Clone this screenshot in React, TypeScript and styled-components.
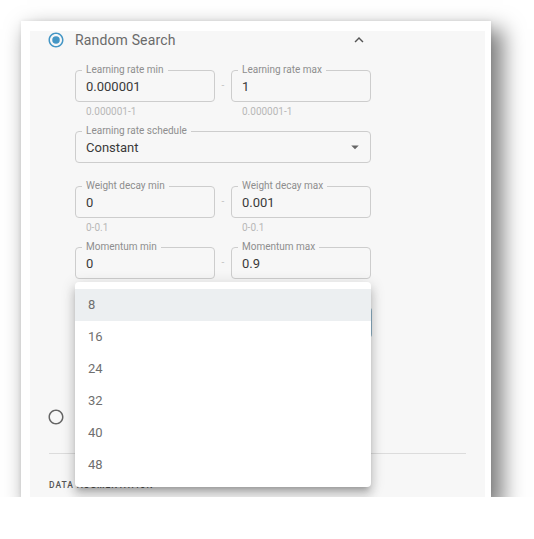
import styled, { createGlobalStyle } from "styled-components";

const GlobalStyle = createGlobalStyle`
  html, body {
    margin: 0;
    background: #ffffff;
    font-family: Roboto, "Liberation Sans", sans-serif;
  }
`;

const Card = styled.div`
  margin: 21px 0 0 21px;
  width: 470px;
  height: 476px;
  box-sizing: border-box;
  padding: 0 6px 0 9px;
  background: #ffffff;
  overflow: hidden;
  box-shadow: 9px 11px 20px 3px rgba(0, 0, 0, 0.5), 0 0 4px rgba(0, 0, 0, 0.07);
`;

const Panel = styled.div`
  height: 100%;
  background: #f7f7f7;
  padding: 0 19px 0 17px;
  box-sizing: border-box;
`;

const OptionRow = styled.div<{ $mt: number }>`
  display: flex;
  align-items: center;
  width: 321px;
  height: 18px;
  margin-top: ${(p) => p.$mt}px;
`;

const OptionLabel = styled.span`
  margin-left: 10px;
  font-size: 14px;
  letter-spacing: 0.15px;
  color: #6a6a6a;
`;

const Toggle = styled.span`
  margin-left: auto;
  display: flex;
  color: #555;
`;

const OptionBody = styled.div`
  margin: 15px 0 0 28px;
  width: 296px;
`;

const RangeRow = styled.div<{ $mt?: number }>`
  display: flex;
  align-items: flex-end;
  margin-top: ${(p) => p.$mt ?? 0}px;
`;

const Dash = styled.span`
  width: 16px;
  text-align: center;
  font-size: 10px;
  color: #c4c4c4;
  line-height: 32px;
`;

const HelperRow = styled.div`
  display: flex;
  gap: 16px;
  margin-top: 4px;
`;

const Helper = styled.span`
  width: 140px;
  box-sizing: border-box;
  padding-left: 11px;
  font-size: 10px;
  line-height: 12px;
  color: #b8b8b8;
`;

const Box = styled.fieldset<{ $width: number; $focused?: boolean; $mt?: number; $flat?: boolean }>`
  margin: ${(p) => p.$mt ?? 0}px 0 0 0;
  min-width: 0;
  width: ${(p) => p.$width}px;
  box-sizing: border-box;
  padding: ${(p) => (p.$flat ? "2px" : "0")} 6px 5px 6px;
  border: ${(p) => (p.$focused ? "2px solid #8fb3c7" : "1px solid #cdcdcd")};
  border-radius: 4px;
`;

const Legend = styled.legend`
  padding: 0 4px;
  font-size: 10px;
  line-height: 12px;
  color: #8e8e8e;
`;

const Value = styled.div`
  display: flex;
  align-items: center;
  justify-content: space-between;
  padding-left: 4px;
  height: 20px;
  font-size: 13px;
  color: #3a3a3a;
`;

const MenuAnchor = styled.div`
  position: relative;
  margin-top: 12px;
`;

const Menu = styled.ul`
  position: absolute;
  top: -25px;
  left: 0;
  width: 296px;
  margin: 0;
  padding: 7px 0 6px;
  list-style: none;
  background: #ffffff;
  border-radius: 4px;
  z-index: 10;
  box-shadow: 0 5px 5px -3px rgba(0, 0, 0, 0.2), 0 8px 10px 1px rgba(0, 0, 0, 0.14),
    0 3px 14px 2px rgba(0, 0, 0, 0.12);
`;

const MenuItem = styled.li<{ $selected?: boolean }>`
  height: 32px;
  line-height: 32px;
  padding-left: 13px;
  font-size: 13px;
  color: #6f6f6f;
  background: ${(p) => (p.$selected ? "#eceff1" : "transparent")};
`;

const Divider = styled.hr`
  margin: 27px 0 0 2px;
  border: none;
  border-top: 1px solid #dcdcdc;
`;

const SectionTitle = styled.div`
  margin: 25px 0 0 2px;
  font-size: 8.5px;
  font-weight: 500;
  letter-spacing: 1px;
  line-height: 12px;
  color: #555;
`;

const RadioIcon = ({ checked }: { checked?: boolean }) => (
  <svg width="18" height="18" viewBox="0 0 24 24" fill={checked ? "#4496c5" : "#666"}>
    <path d="M12 2C6.48 2 2 6.48 2 12s4.48 10 10 10 10-4.48 10-10S17.52 2 12 2zm0 18c-4.42 0-8-3.58-8-8s3.58-8 8-8 8 3.58 8 8-3.58 8-8 8z" />
    {checked && <circle cx="12" cy="12" r="5" />}
  </svg>
);

const ExpandLess = () => (
  <svg width="18" height="18" viewBox="0 0 24 24" fill="currentColor">
    <path d="M12 8l-6 6 1.41 1.41L12 10.83l4.59 4.58L18 14z" />
  </svg>
);

const ArrowDrop = () => (
  <svg width="18" height="18" viewBox="0 0 24 24" fill="#666">
    <path d="M7 10l5 5 5-5z" />
  </svg>
);

type FieldProps = { label?: string; value: string; width?: number; mt?: number; select?: boolean; focused?: boolean };

const Field = ({ label, value, width = 140, mt, select, focused }: FieldProps) => (
  <Box $width={width} $mt={mt} $focused={focused} $flat={!label}>
    {label && <Legend>{label}</Legend>}
    <Value>
      {value}
      {select && <ArrowDrop />}
    </Value>
  </Box>
);

const Range = ({ min, max, hint, mt }: { min: [string, string]; max: [string, string]; hint: string; mt?: number }) => (
  <>
    <RangeRow $mt={mt}>
      <Field label={min[0]} value={min[1]} />
      <Dash>-</Dash>
      <Field label={max[0]} value={max[1]} />
    </RangeRow>
    <HelperRow>
      <Helper>{hint}</Helper>
      <Helper>{hint}</Helper>
    </HelperRow>
  </>
);

const batchSizes = ["8", "16", "24", "32", "40", "48"];

export default function App() {
  return (
    <>
      <GlobalStyle />
      <Card>
        <Panel>
          <OptionRow $mt={10}>
            <RadioIcon checked />
            <OptionLabel>Random Search</OptionLabel>
            <Toggle>
              <ExpandLess />
            </Toggle>
          </OptionRow>
          <OptionBody>
            <Range min={["Learning rate min", "0.000001"]} max={["Learning rate max", "1"]} hint="0.000001-1" />
            <Field label="Learning rate schedule" value="Constant" width={296} mt={7} select />
            <Range mt={17} min={["Weight decay min", "0"]} max={["Weight decay max", "0.001"]} hint="0-0.1" />
            <Range mt={7} min={["Momentum min", "0"]} max={["Momentum max", "0.9"]} hint="0-1" />
            <MenuAnchor>
              {/* batch size select, open: its menu covers it */}
              <Field value="" width={297} select focused />
              <Menu>
                {batchSizes.map((size, i) => (
                  <MenuItem key={size} $selected={i === 0}>
                    {size}
                  </MenuItem>
                ))}
              </Menu>
            </MenuAnchor>
          </OptionBody>
          <OptionRow $mt={70}>
            <RadioIcon />
          </OptionRow>
          <Divider />
          <SectionTitle>DATA AUGMENTATION</SectionTitle>
        </Panel>
      </Card>
    </>
  );
}
